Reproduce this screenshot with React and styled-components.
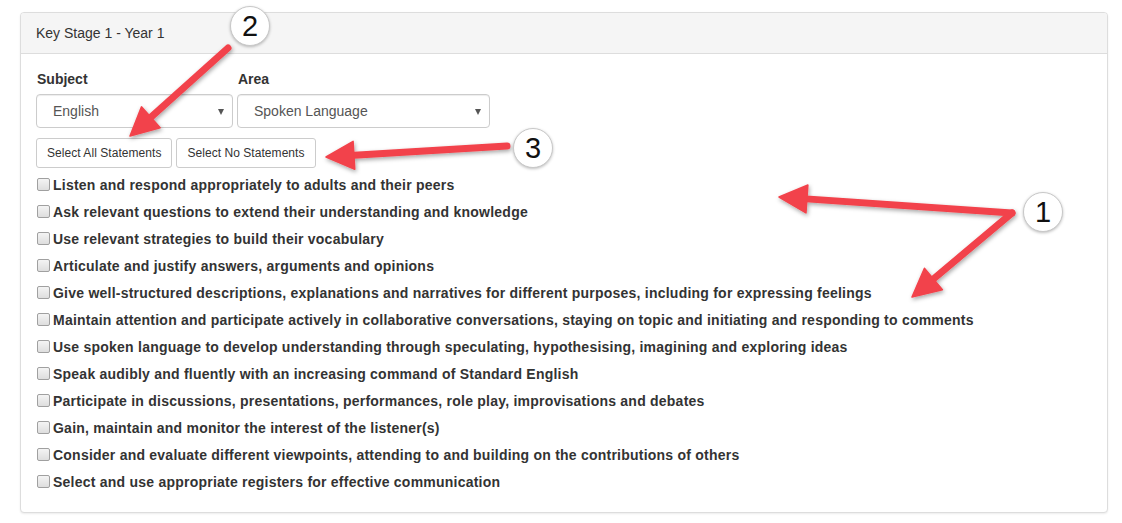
import React from 'react'
import styled, { createGlobalStyle } from 'styled-components'

const GlobalStyle = createGlobalStyle`
body {
  margin: 0;
  background: #fff;
  font-family: "Liberation Sans", Arial, sans-serif;
  color: #333;
}
`

const Page = styled.div`
position: relative;
width: 1122px;
height: 523px;
padding: 12px 14px 0 20px;
box-sizing: border-box;
`

const Panel = styled.div`
border: 1px solid #ddd;
border-radius: 4px;
box-shadow: 0 1px 2px rgba(0, 0, 0, 0.08);
background: #fff;
`

const Heading = styled.div`
height: 41px;
box-sizing: border-box;
padding: 10px 15px;
background: #f5f5f5;
border-bottom: 1px solid #ddd;
border-radius: 3px 3px 0 0;
font-size: 14px;
line-height: 20px;
color: #333;
`

const Body = styled.div`
padding: 15px 15px 20px;
`

const FormRow = styled.div`
display: flex;
gap: 4px;
`

const Field = styled.div`
display: flex;
flex-direction: column;
width: ${p => p.width}px;
`

const Label = styled.label`
font-size: 14px;
font-weight: bold;
line-height: 20px;
margin-bottom: 5px;
padding-left: 1px;
`

const SelectBox = styled.div`
display: flex;
align-items: center;
justify-content: space-between;
height: 34px;
box-sizing: border-box;
padding: 0 8px 0 16px;
border: 1px solid #ccc;
border-radius: 4px;
box-shadow: inset 0 1px 1px rgba(0, 0, 0, 0.075);
font-size: 14px;
color: #555;
`

const Caret = styled.span`
width: 0;
height: 0;
border-left: 3.5px solid transparent;
border-right: 3.5px solid transparent;
border-top: 6px solid #555;
margin-top: 1px;
`

const ButtonRow = styled.div`
display: flex;
gap: 4px;
margin-top: 10px;
`

const Button = styled.button`
height: 30px;
padding: 0 10px;
background: #fff;
border: 1px solid #ccc;
border-radius: 3px;
font-family: "Liberation Sans", Arial, sans-serif;
font-size: 12px;
letter-spacing: 0.05px;
color: #333;
cursor: pointer;
`

const List = styled.div`
display: flex;
flex-direction: column;
gap: 7px;
margin-top: 7px;
`

const Item = styled.label`
display: flex;
align-items: center;
gap: 3px;
height: 20px;
font-size: 14px;
font-weight: bold;
letter-spacing: 0.23px;
color: #333;
`

const Check = styled.input.attrs({ type: 'checkbox' })`
appearance: none;
width: 13px;
height: 13px;
margin: 0 0 1px 1px;
border: 1px solid #a0a0a0;
border-radius: 2px;
background: linear-gradient(#f4f4f4, #dedede);
`

const Overlay = styled.svg`
position: absolute;
left: 0;
top: 0;
pointer-events: none;
overflow: visible;
`

const Badge = styled.div`
position: absolute;
left: ${p => p.x - 20}px;
top: ${p => p.y - 20}px;
width: 40px;
height: 40px;
box-sizing: border-box;
border-radius: 50%;
border: 1px solid #c8c8c8;
background: #fff;
box-shadow: 0 1px 3px rgba(0, 0, 0, 0.25);
display: flex;
align-items: center;
justify-content: center;
font-size: 29px;
color: #111;
`

const statements = [
  'Listen and respond appropriately to adults and their peers',
  'Ask relevant questions to extend their understanding and knowledge',
  'Use relevant strategies to build their vocabulary',
  'Articulate and justify answers, arguments and opinions',
  'Give well-structured descriptions, explanations and narratives for different purposes, including for expressing feelings',
  'Maintain attention and participate actively in collaborative conversations, staying on topic and initiating and responding to comments',
  'Use spoken language to develop understanding through speculating, hypothesising, imagining and exploring ideas',
  'Speak audibly and fluently with an increasing command of Standard English',
  'Participate in discussions, presentations, performances, role play, improvisations and debates',
  'Gain, maintain and monitor the interest of the listener(s)',
  'Consider and evaluate different viewpoints, attending to and building on the contributions of others',
  'Select and use appropriate registers for effective communication',
]

const arrows = [
  { from: [228, 48], to: [130, 136] },
  { from: [507, 146], to: [326, 157] },
  { from: [1012, 213], to: [779, 197] },
  { from: [1012, 213], to: [912, 297] },
]

function Arrow({ from, to }) {
  const dx = to[0] - from[0]
  const dy = to[1] - from[1]
  const len = Math.hypot(dx, dy)
  const ux = dx / len
  const uy = dy / len
  const bx = to[0] - ux * 28
  const by = to[1] - uy * 28
  const px = -uy * 14
  const py = ux * 14
  const lx = to[0] - ux * 20
  const ly = to[1] - uy * 20
  return (
    <g>
      <line x1={from[0]} y1={from[1]} x2={lx} y2={ly} stroke="#f2434b" strokeWidth="7" strokeLinecap="round" />
      <polygon
        points={`${to[0]},${to[1]} ${bx + px},${by + py} ${bx - px},${by - py}`}
        fill="#f2434b"
        stroke="#f2434b"
        strokeWidth="1.5"
        strokeLinejoin="round"
      />
    </g>
  )
}

export default function App() {
  return (
    <>
      <GlobalStyle />
      <Page>
        <Panel>
          <Heading>Key Stage 1 - Year 1</Heading>
          <Body>
            <FormRow>
              <Field width={197}>
                <Label>Subject</Label>
                <SelectBox>English<Caret /></SelectBox>
              </Field>
              <Field width={253}>
                <Label>Area</Label>
                <SelectBox>Spoken Language<Caret /></SelectBox>
              </Field>
            </FormRow>
            <ButtonRow>
              <Button>Select All Statements</Button>
              <Button>Select No Statements</Button>
            </ButtonRow>
            <List>
              {statements.map(s => (
                <Item key={s}>
                  <Check />
                  {s}
                </Item>
              ))}
            </List>
          </Body>
        </Panel>

        <Overlay width="1122" height="523">
          <defs>
            <filter id="shadow" x="-20%" y="-20%" width="140%" height="140%">
              <feDropShadow dx="1" dy="2" stdDeviation="2" floodColor="#000" floodOpacity="0.35" />
            </filter>
          </defs>
          <g filter="url(#shadow)">
            {arrows.map((a, i) => <Arrow key={i} {...a} />)}
          </g>
        </Overlay>
        <Badge x={250} y={26}>2</Badge>
        <Badge x={533} y={148}>3</Badge>
        <Badge x={1043} y={212}>1</Badge>
      </Page>
    </>
  )
}
